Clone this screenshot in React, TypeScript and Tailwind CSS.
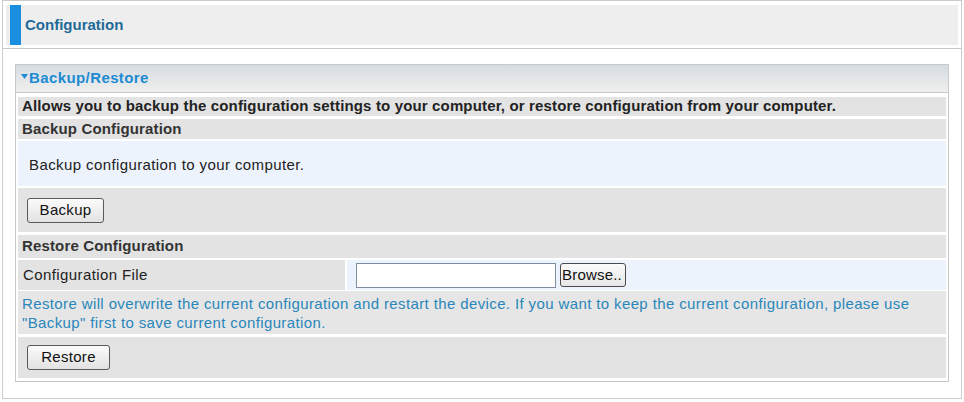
import React from "react";

const Btn = ({ label, w }: { label: string; w: string }) => (
  <button
    className={`${w} h-[25px] rounded-[3px] border border-[#5a5a5a] bg-gradient-to-b from-[#fbfbfb] to-[#e2e2e2] text-[15px] text-[#111] tracking-[0.3px]`}
  >
    {label}
  </button>
);

export default function App() {
  return (
    <div className="w-[964px] h-[402px] bg-white font-['Liberation_Sans',Arial,sans-serif] text-[15px] text-[#222]">
      <div className="ml-[2px] w-[960px] h-[399px] border border-[#cccccc] flex flex-col">
        {/* Title header */}
        <div className="h-[48px] border-b border-[#c8c8c8] px-[3px] pt-[4px]">
          <div className="h-[40px] bg-[#eeeeee] flex items-stretch">
            <div className="ml-[4px] w-[11px] bg-[#1a8fe0]" />
            <div className="ml-[4px] flex items-center font-bold text-[15px] text-[#1f6b98]">
              Configuration
            </div>
          </div>
        </div>

        {/* Panel */}
        <div className="px-[12px] pt-[15px]">
          <div className="border border-[#c8c8c8] pb-[3px]">
            <div className="h-[28px] border-b border-[#c8c8c8] bg-gradient-to-b from-[#d6dce3] to-[#efefed] flex items-center pl-[5px] font-bold text-[#1c8bd2] tracking-[0.4px]">
              <svg width="7" height="5" viewBox="0 0 7 5" className="mr-[1px] mb-[4px]">
                <path d="M0 0 L7 0 L3.5 5 Z" fill="#1c8bd2" />
              </svg>
              Backup/Restore
            </div>

            <div className="px-[2px] pt-[4px] flex flex-col">
              <div className="h-[19px] bg-[#e3e3e3] flex items-center pl-[4px] font-bold text-[#222] tracking-[0.15px]">
                Allows you to backup the configuration settings to your computer, or restore configuration from your computer.
              </div>
              <div className="mt-[3px] h-[20px] bg-[#e3e3e3] flex items-center pl-[4px] font-bold text-[#333] tracking-[0.15px]">
                Backup Configuration
              </div>
              <div className="mt-[2px] h-[45px] bg-[#edf3fc] flex items-center pl-[11px] pt-[3px] tracking-[0.4px]">
                Backup configuration to your computer.
              </div>
              <div className="mt-[2px] h-[44px] bg-[#e3e3e3] flex items-center pl-[9px]">
                <Btn label="Backup" w="w-[77px]" />
              </div>
              <div className="mt-[3px] h-[23px] bg-[#e3e3e3] flex items-center pl-[4px] font-bold text-[#333] tracking-[0.15px]">
                Restore Configuration
              </div>
              <div className="mt-[2px] h-[30px] flex gap-[2px]">
                <div className="w-[327px] bg-[#e3e3e3] flex items-center pl-[5px] tracking-[0.4px]">
                  Configuration File
                </div>
                <div className="flex-1 bg-[#edf3fc] flex items-center pl-[9px] gap-[4px]">
                  <div className="w-[200px] h-[25px] border border-[#7f8fa3] bg-white" />
                  <button className="w-[66px] h-[24px] rounded-[3px] border border-[#4a4a4a] bg-gradient-to-b from-[#fbfbfb] to-[#e6e6e6] text-left pl-[1px] text-[15px] text-[#111] tracking-[0.2px]">
                    Browse..
                  </button>
                </div>
              </div>
              <div className="mt-[1px] h-[43px] bg-[#e6e6e6] flex flex-col justify-center pl-[4px] text-[#2a87bb] leading-[19px] tracking-[0.38px]">
                <div>
                  Restore will overwrite the current configuration and restart the device. If you want to keep the current configuration, please use
                </div>
                <div>"Backup" first to save current configuration.</div>
              </div>
              <div className="mt-[3px] h-[41px] bg-[#e3e3e3] flex items-center pl-[9px]">
                <Btn label="Restore" w="w-[83px]" />
              </div>
            </div>
          </div>
        </div>
      </div>
    </div>
  );
}
